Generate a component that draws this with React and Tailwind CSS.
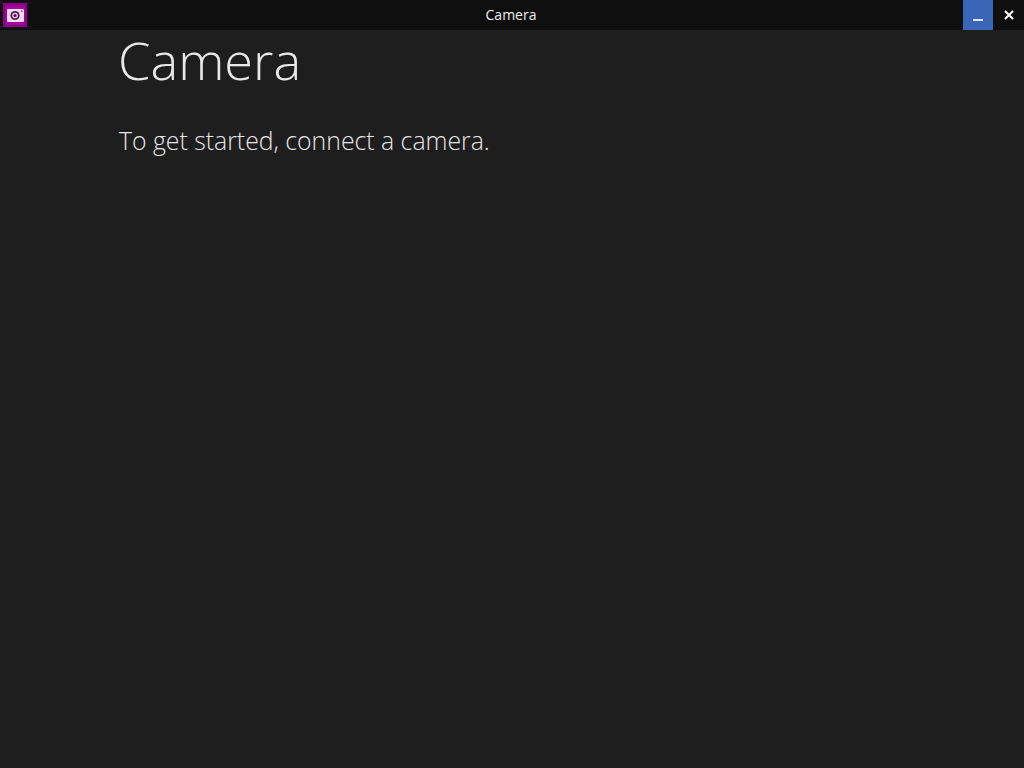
import React from 'react'

const font = "font-['Open_Sans','Noto_Sans',sans-serif]"

const CameraTile = () => (
  <div className="w-[24px] h-[24px] ml-[3px] mt-[3px] bg-[#a3009c] border-2 border-[#8a0088] flex items-center justify-center">
    <svg width="17" height="13" viewBox="0 0 17 13">
      <rect x="0" y="0" width="17" height="13" rx="1" fill="#f3dcf2" />
      <circle cx="8" cy="6.5" r="4.6" fill="#5a1a5c" />
      <circle cx="8" cy="6.5" r="2.8" fill="#e8cce8" />
      <circle cx="8" cy="6.5" r="1.5" fill="#4a1050" />
      <rect x="14" y="1.5" width="1.6" height="1.2" fill="#7a2a80" />
    </svg>
  </div>
)

const App = () => {
  return (
    <div className={`w-[1024px] h-[768px] overflow-hidden flex flex-col bg-[#1e1e1e] ${font}`}>
      {/* Title bar */}
      <div className="h-[30px] shrink-0 flex items-start justify-between bg-[#0f0f0f]">
        <div className="w-[61px]">
          <CameraTile />
        </div>
        <div className="flex-1 text-center text-[14px] leading-[30px] text-[#eeeeee] pr-[2px]">Camera</div>
        <div className="w-[61px] flex h-[30px]">
          <div className="w-[30px] h-[30px] bg-[#3a66b8] flex items-end justify-center pb-[9px]">
            <div className="w-[10px] h-[2px] bg-[#dce8fa]" />
          </div>
          <div className="w-[31px] h-[30px] flex items-center justify-center">
            <svg width="10" height="10" viewBox="0 0 10 10">
              <path d="M1 1 L9 9 M9 1 L1 9" stroke="#f5f5f5" strokeWidth="2.2" />
            </svg>
          </div>
        </div>
      </div>

      {/* Content */}
      <div className="flex-1 pl-[118px]">
        <h1 className="text-[52.3px] leading-[60px] font-light text-[#e8e8e8]">Camera</h1>
        <p className="mt-[34px] ml-px text-[24.8px] leading-[32px] font-light text-[#e6e6e6]">To get started, connect a camera.</p>
      </div>
    </div>
  )
}

export default App
